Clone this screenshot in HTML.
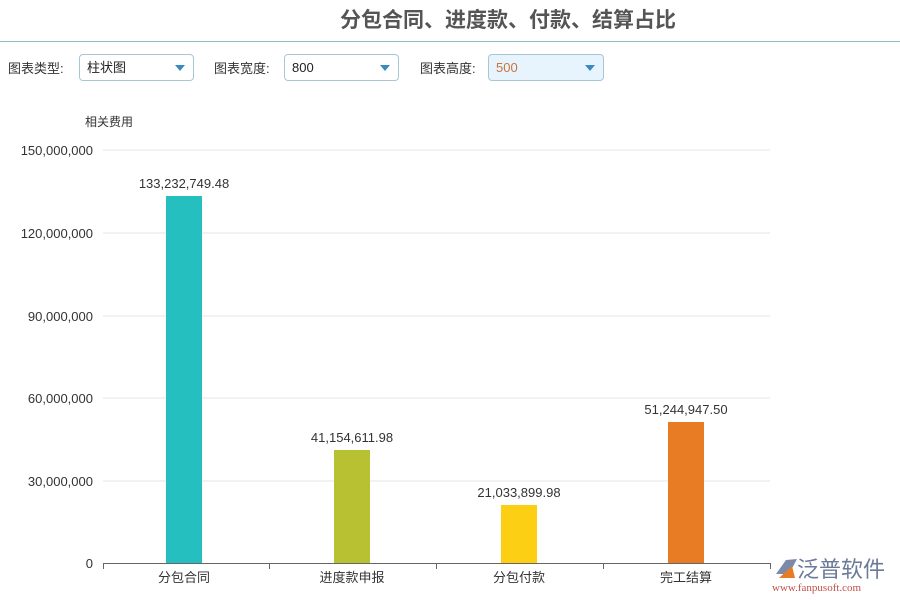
<!DOCTYPE html>
<html><head><meta charset="utf-8"><style>
body{margin:0;width:900px;height:600px;background:#fff;font-family:"Liberation Sans","Noto Sans CJK SC",sans-serif;position:relative;overflow:hidden}
.t{position:absolute;top:4px;left:0;width:1016px;text-align:center;font-size:21px;font-weight:bold;color:#555}
.hr{position:absolute;top:41px;left:0;width:900px;height:1px;background:#8fb8c8}
.l{position:absolute;top:58px;font-size:13px;color:#333}
.s{position:absolute;top:54px;height:27px;border:1px solid #a9c6d6;border-radius:4px;font-size:13px;line-height:26px;padding-left:7px;box-sizing:border-box;color:#222}
.s:after{content:"";position:absolute;right:8px;top:10px;border:5px solid transparent;border-top:6px solid #3a8ac0}
</style></head><body>
<div class="t">分包合同、进度款、付款、结算占比</div>
<div class="hr"></div>
<div class="l" style="left:8px">图表类型:</div>
<div class="s" style="left:79px;width:115px">柱状图</div>
<div class="l" style="left:214px">图表宽度:</div>
<div class="s" style="left:284px;width:115px">800</div>
<div class="l" style="left:420px">图表高度:</div>
<div class="s" style="left:488px;width:116px;background:#e8f4fd;color:#c8753a">500</div>
<svg width="900" height="600" style="position:absolute;left:0;top:0" font-family="Liberation Sans,Noto Sans CJK SC,sans-serif">
<text x="85" y="126" font-size="12" fill="#333">相关费用</text>
<g stroke="#e6e6e6"><line x1="103" y1="150" x2="770" y2="150"/><line x1="103" y1="233" x2="770" y2="233"/><line x1="103" y1="316" x2="770" y2="316"/><line x1="103" y1="398" x2="770" y2="398"/><line x1="103" y1="481" x2="770" y2="481"/></g>
<g font-size="13" fill="#333" text-anchor="end"><text x="93" y="155">150,000,000</text><text x="93" y="238">120,000,000</text><text x="93" y="321">90,000,000</text><text x="93" y="403">60,000,000</text><text x="93" y="486">30,000,000</text><text x="93" y="568">0</text></g>
<line x1="103" y1="563.5" x2="770" y2="563.5" stroke="#666"/>
<g stroke="#666"><line x1="103.5" y1="563" x2="103.5" y2="569"/><line x1="269.5" y1="563" x2="269.5" y2="569"/><line x1="436.5" y1="563" x2="436.5" y2="569"/><line x1="603.5" y1="563" x2="603.5" y2="569"/><line x1="770.5" y1="563" x2="770.5" y2="569"/></g>
<rect x="166" y="196" width="36" height="367" fill="#26bfbf"/>
<rect x="334" y="450" width="36" height="113" fill="#b8c132"/>
<rect x="501" y="505" width="36" height="58" fill="#fccf14"/>
<rect x="668" y="422" width="36" height="141" fill="#e87c24"/>
<g font-size="13" fill="#333" text-anchor="middle"><text x="184" y="188">133,232,749.48</text><text x="352" y="442">41,154,611.98</text><text x="519" y="497">21,033,899.98</text><text x="686" y="414">51,244,947.50</text>
<text x="184" y="582">分包合同</text><text x="352" y="582">进度款申报</text><text x="519" y="582">分包付款</text><text x="686" y="582">完工结算</text></g>
<path d="M776 574 L786 560 L797 559 L789 574 Z" fill="#7a8aa8"/><path d="M779 578 L792 566 L795 578 Z" fill="#e87c24"/>
<text x="797" y="577" font-size="22" fill="#6a7a98">泛普软件</text>
<text x="772" y="591" font-size="11" fill="#c0504d" font-family="Liberation Serif,serif">www.fanpusoft.com</text>
</svg>
</body></html>
